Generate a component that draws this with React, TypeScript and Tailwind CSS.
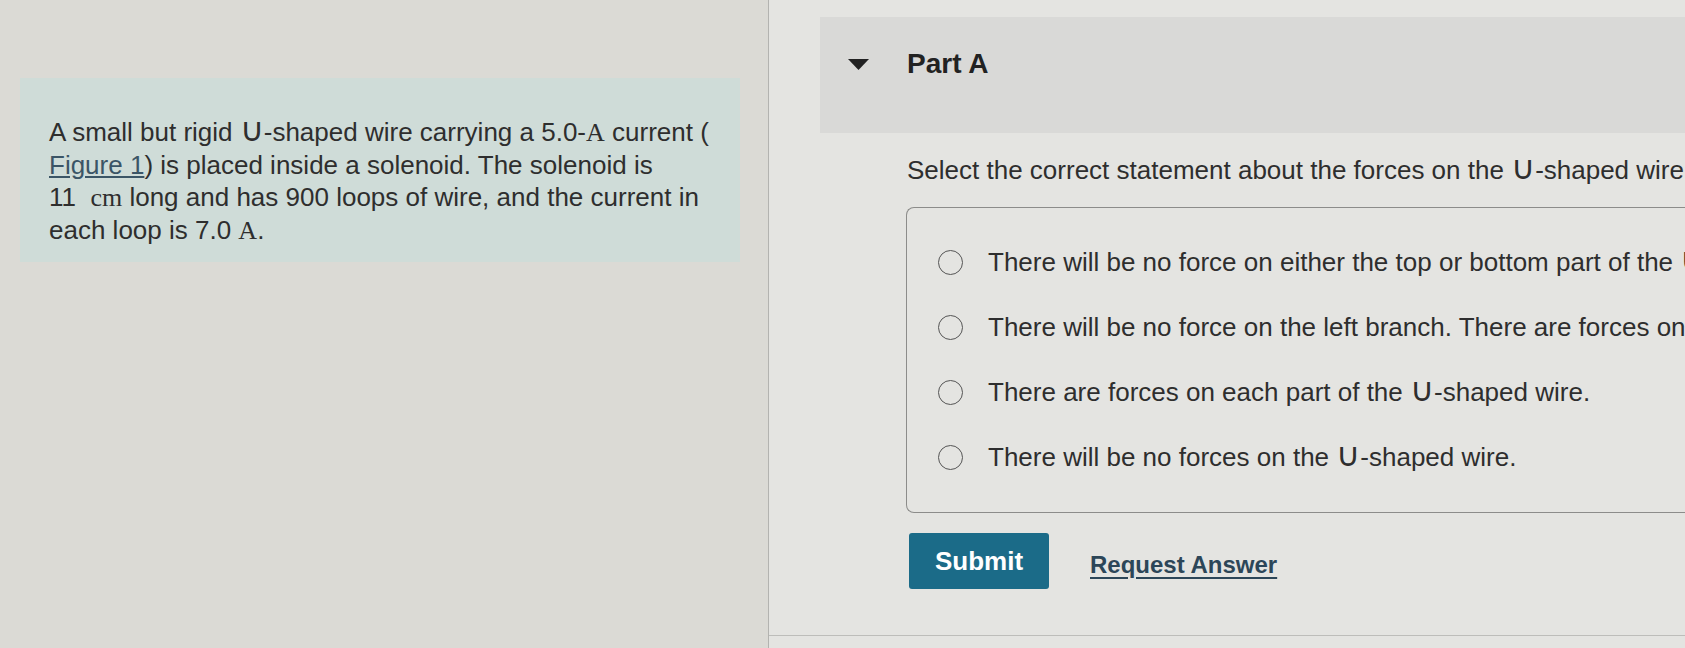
const sans = "font-['Liberation_Sans',Arial,sans-serif]";

function U() {
  return (
    <span className="inline-block align-baseline font-['DejaVu_Sans',sans-serif] text-[1.25em] leading-[0] font-extralight">
      ∪
    </span>
  );
}

function M({ children }: { children: React.ReactNode }) {
  return <span className="font-['Liberation_Serif','Times_New_Roman',serif]">{children}</span>;
}

const options = [
  <>There will be no force on either the top or bottom part of the <U />-shaped wire.</>,
  <>There will be no force on the left branch. There are forces on the other parts of the <U />-shaped wire.</>,
  <>There are forces on each part of the <U />-shaped wire.</>,
  <>There will be no forces on the <U />-shaped wire.</>
];

export default function App() {
  return (
    <div className={`flex h-[648px] w-[1685px] overflow-hidden bg-[#dbdad5] text-[#2e2e2e] ${sans}`}>
      {/* problem statement */}
      <div className="w-[769px] shrink-0 border-r border-[#b3b3b0] pt-[78px]">
        <div className="ml-[20px] h-[184px] w-[720px] bg-[#cfdcd8] pl-[29px] pt-[38px] text-[26px] leading-[32px]">
          A small but rigid <U />-shaped wire carrying a 5.0-<M>A</M> current (
          <br />
          <span className="text-[#3b5566] underline underline-offset-2">Figure 1</span>) is placed inside a solenoid. The solenoid is
          <br />
          11&nbsp; <M>cm</M> long and has 900 loops of wire, and the current in
          <br />
          each loop is 7.0 <M>A</M>.
        </div>
      </div>

      {/* part A */}
      <div className="flex-1 whitespace-nowrap bg-[#e4e4e1]">
        <div className="ml-[51px] mt-[17px] h-[116px] bg-[#d9d9d7] pl-[28px] pt-[31px]">
          <div className="flex items-center gap-[38px] text-[28px] font-bold leading-[32px] text-[#222]">
            <svg width="21" height="11" viewBox="0 0 21 11" aria-hidden>
              <path d="M0 0 H21 L10.5 11 Z" fill="#222" />
            </svg>
            Part A
          </div>
        </div>

        <p className="ml-[138px] mt-[22px] text-[26px] leading-[30px]">
          Select the correct statement about the forces on the <U />-shaped wire.
        </p>

        <div className="ml-[137px] mt-[22px] rounded-l-[8px] border-y-[1.5px] border-l-[1.5px] border-[#8c8c8a] py-[22px]">
          {options.map((text, i) => (
            <div key={i} className="flex h-[65px] items-center gap-[25px] pl-[31px] text-[26px]">
              <span className="size-[25px] shrink-0 rounded-full border-[1.5px] border-[#555]" />
              <span>{text}</span>
            </div>
          ))}
        </div>

        <div className="ml-[140px] mt-[20px] flex items-center gap-[41px]">
          <button className="h-[56px] w-[140px] rounded-[3px] bg-[#1b6b88] text-[26px] font-bold text-white">
            Submit
          </button>
          <a className="pt-[8px] text-[24px] font-bold text-[#2c4658] underline underline-offset-4">Request Answer</a>
        </div>

        <div className="mt-[46px] border-t border-[#bdbdba]" />
      </div>
    </div>
  );
}
